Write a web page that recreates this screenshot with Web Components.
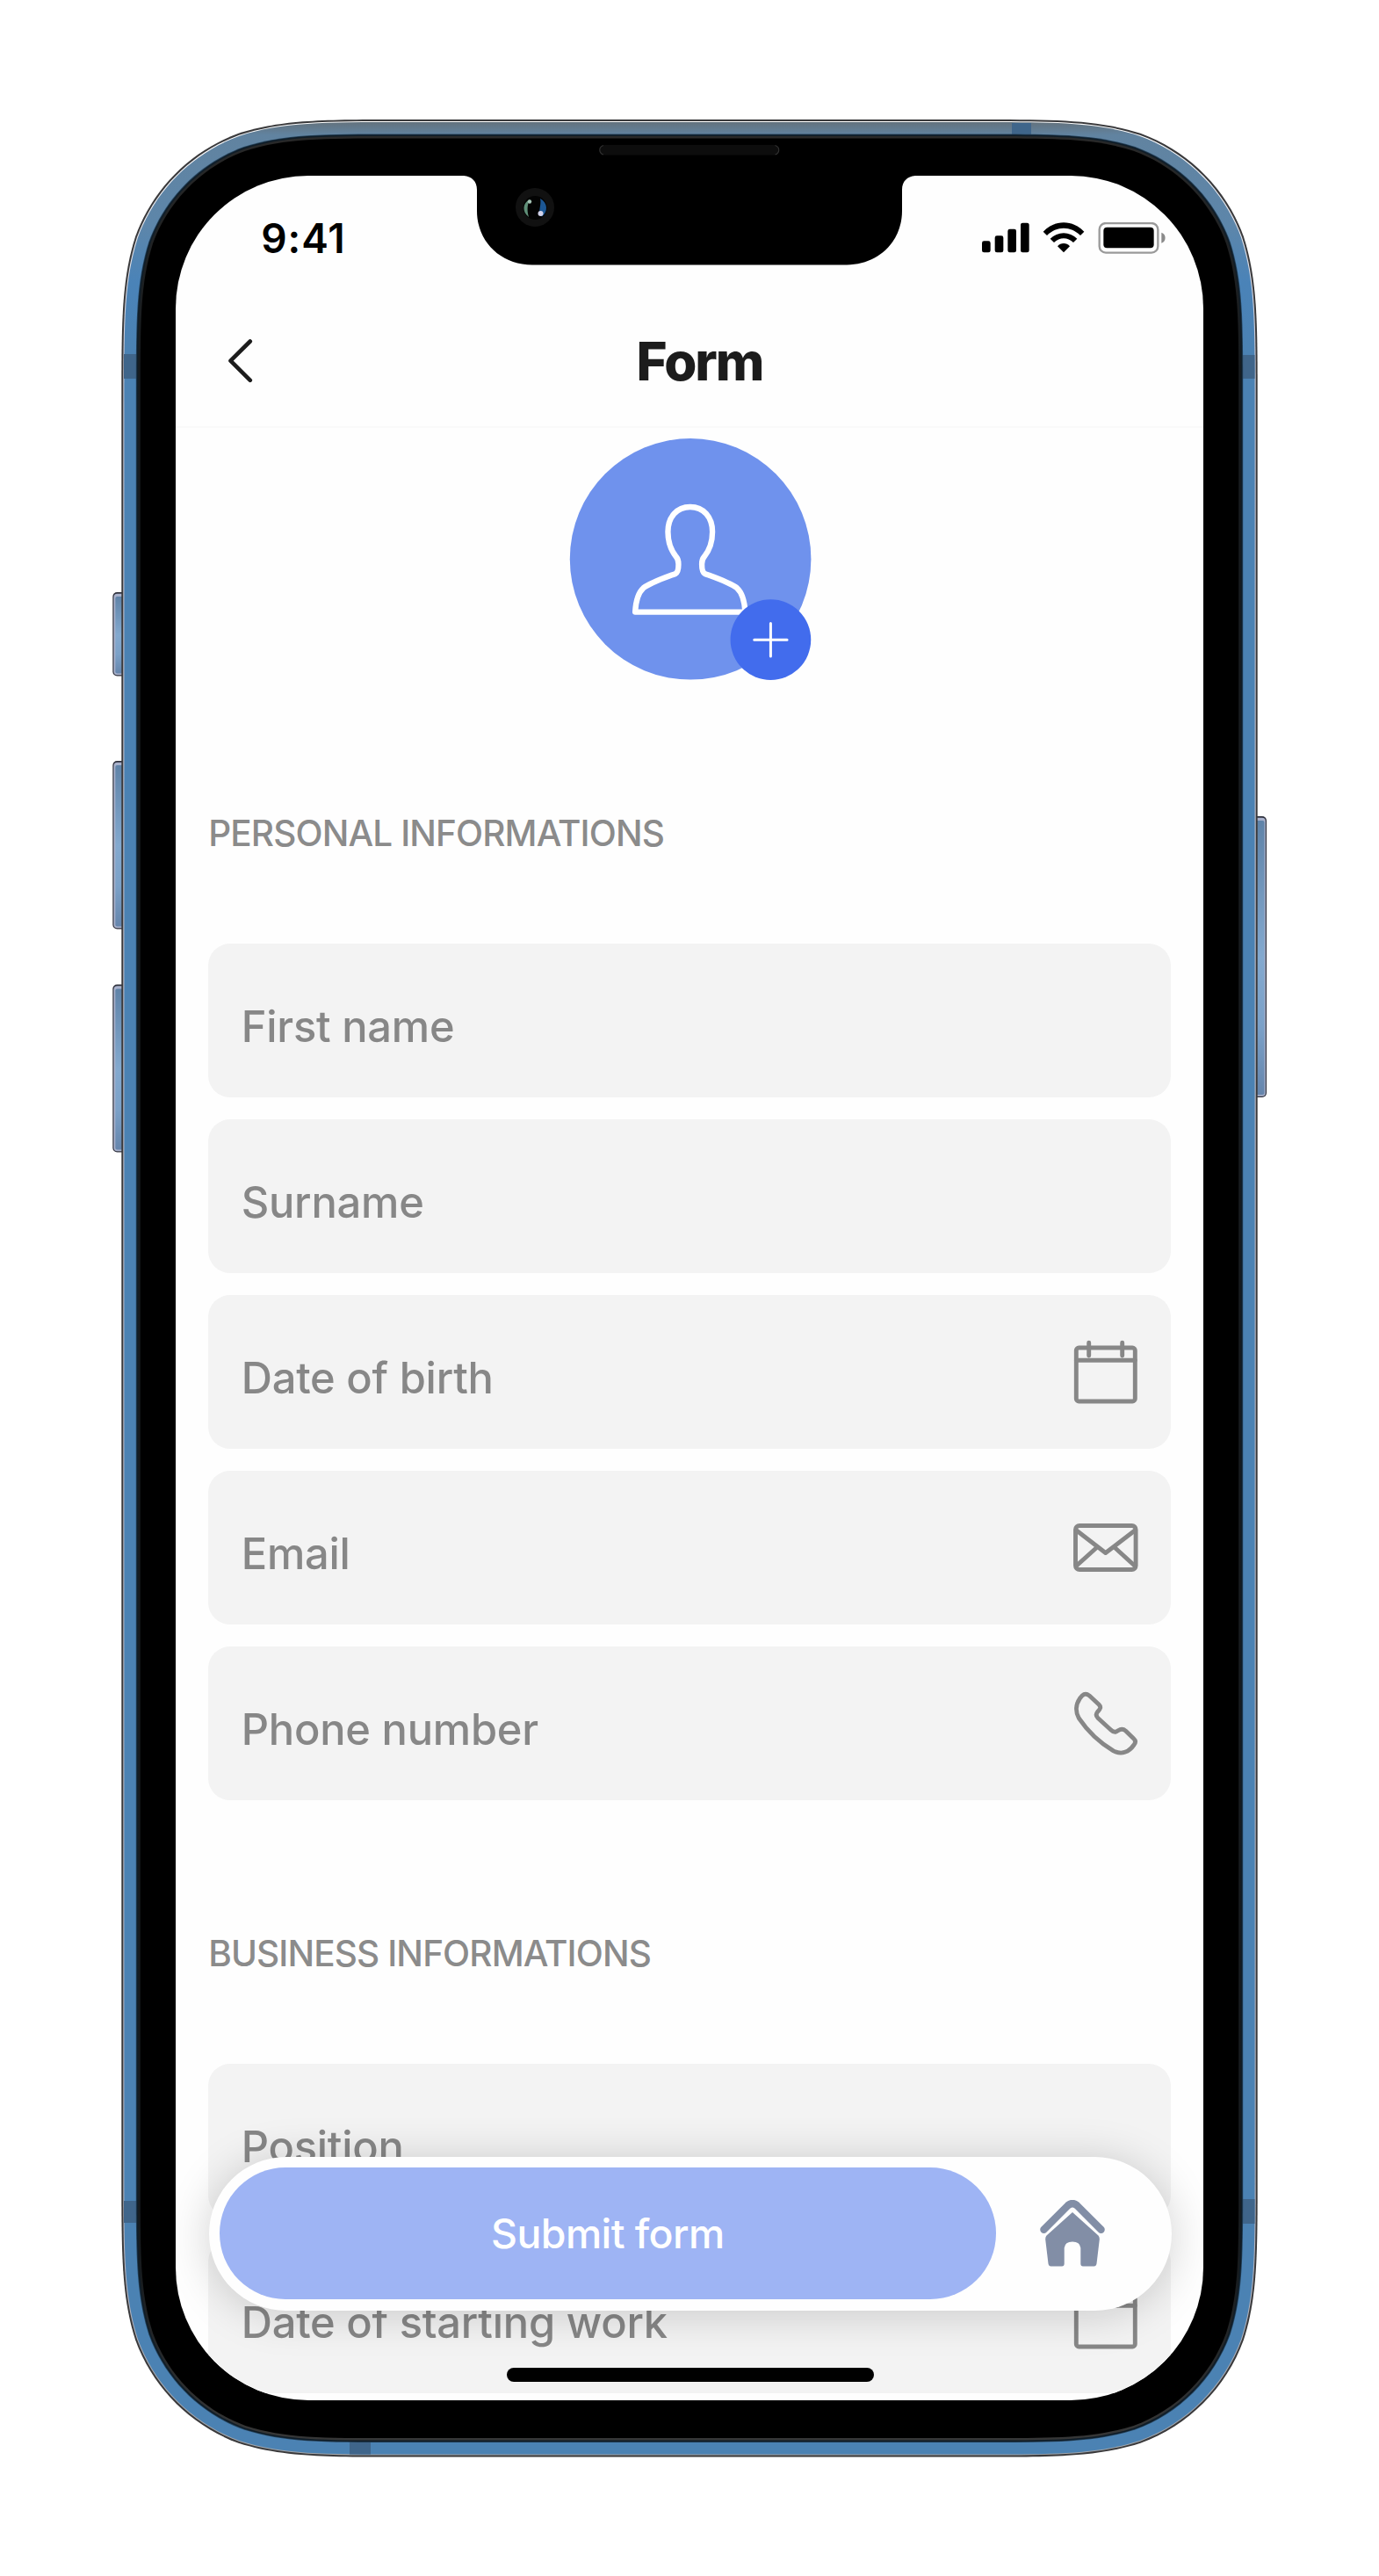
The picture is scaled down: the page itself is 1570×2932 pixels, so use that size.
<!DOCTYPE html>
<html lang="en">
<head>
<meta charset="utf-8">
<title>Form</title>
<style>
  html, body { margin: 0; background: #fff; }
  body { font-family: Inter, "Liberation Sans", sans-serif; color: #000; }
</style>
</head>
<body>
<phone-frame>
  <phone-screen>
    <status-bar time="9:41"></status-bar>
    <nav-header>Form</nav-header>
    <avatar-picker></avatar-picker>
    <form-section heading="PERSONAL INFORMATIONS">
      <form-field>First name</form-field>
      <form-field>Surname</form-field>
      <form-field icon="calendar">Date of birth</form-field>
      <form-field icon="mail">Email</form-field>
      <form-field icon="phone">Phone number</form-field>
    </form-section>
    <form-section heading="BUSINESS INFORMATIONS">
      <form-field>Position</form-field>
      <form-field icon="calendar">Date of starting work</form-field>
    </form-section>
    <action-bar slot="overlay">Submit form</action-bar>
  </phone-screen>
</phone-frame>
<script>
const define = (name, render) => customElements.define(name, class extends HTMLElement {
  constructor() { super(); this.attachShadow({ mode: 'open' }); }
  connectedCallback() { this.shadowRoot.innerHTML = render(this); }
});

/* Rounded rectangle with continuous-curvature corners. */
function squircle(x, y, w, h, r) {
  const a = 1.52866498 * r, b = 1.08849296 * r, c = .86840694 * r, d = .63149379 * r,
        e = .07491139 * r, f = .37282383 * r, g = .16905956 * r, X = x + w, Y = y + h;
  return `M${x + a} ${y}H${X - a}C${X - b} ${y} ${X - c} ${y} ${X - d} ${y + e}C${X - f} ${y + g} ${X - g} ${y + f} ${X - e} ${y + d}C${X} ${y + c} ${X} ${y + b} ${X} ${y + a}
  V${Y - a}C${X} ${Y - b} ${X} ${Y - c} ${X - e} ${Y - d}C${X - g} ${Y - f} ${X - f} ${Y - g} ${X - d} ${Y - e}C${X - c} ${Y} ${X - b} ${Y} ${X - a} ${Y}
  H${x + a}C${x + b} ${Y} ${x + c} ${Y} ${x + d} ${Y - e}C${x + f} ${Y - g} ${x + g} ${Y - f} ${x + e} ${Y - d}C${x} ${Y - c} ${x} ${Y - b} ${x} ${Y - a}
  V${y + a}C${x} ${y + b} ${x} ${y + c} ${x + e} ${y + d}C${x + g} ${y + f} ${x + f} ${y + g} ${x + d} ${y + e}C${x + c} ${y} ${x + b} ${y} ${x + a} ${y}Z`;
}
const shell = (inset, fill) =>
  `<path d="${squircle(138.3 + inset, 136 + inset, 1293.4 - 2 * inset, 2660.6 - 2 * inset, 211 - inset)}" fill="${fill}"/>`;
const sideButton = (x, y, w, h) => `
  <rect x="${x}" y="${y}" width="${w}" height="${h}" rx="5" fill="#30323e"/>
  <rect x="${x + 1.2}" y="${y + 1.8}" width="${w - 2.4}" height="${h - 3}" rx="4" fill="#a9b2cc"/>
  <rect x="${x + 3}" y="${y + 5}" width="${w - 5.5}" height="${h - 8}" rx="2" fill="url(#btn)"/>`;

define('phone-frame', () => `
<style>
  :host { display: grid; width: 1570px; height: 2932px; position: relative; }
  .body, .notch { grid-area: 1 / 1; width: 1570px; height: 2932px; display: block; }
  .notch { pointer-events: none; z-index: 2; }
  .screen { grid-area: 1 / 1; margin: 200px; z-index: 1; }
</style>
<svg class="body" viewBox="0 0 1570 2932">
  <defs>
    <linearGradient id="blue" gradientUnits="userSpaceOnUse" x1="0" y1="138" x2="0" y2="400">
      <stop offset="0" stop-color="#63717b"/><stop offset=".06" stop-color="#6183a0"/>
      <stop offset=".45" stop-color="#5d86aa"/><stop offset=".7" stop-color="#4a83b8"/><stop offset="1" stop-color="#4b82b3"/>
    </linearGradient>
    <linearGradient id="edge" gradientUnits="userSpaceOnUse" x1="0" y1="138" x2="0" y2="2797">
      <stop offset="0" stop-color="#fff"/><stop offset=".1" stop-color="#c8c8d4"/><stop offset=".93" stop-color="#b4b4be"/><stop offset="1" stop-color="#a0a4a8"/>
    </linearGradient>
    <linearGradient id="btn" x1="0" y1="0" x2="0" y2="1">
      <stop offset="0" stop-color="#5f83a8"/><stop offset=".5" stop-color="#83a9cf"/><stop offset=".75" stop-color="#7ba1c8"/><stop offset="1" stop-color="#6585ac"/>
    </linearGradient>
    <linearGradient id="rim" gradientUnits="userSpaceOnUse" x1="0" y1="138" x2="0" y2="2797">
      <stop offset="0" stop-color="#2a2a2a"/><stop offset=".1" stop-color="#171b1e"/><stop offset=".92" stop-color="#171b1e"/><stop offset="1" stop-color="#3a3a3a"/>
    </linearGradient>
  </defs>
  ${sideButton(128.3, 674, 18, 95.5)}
  ${sideButton(128.3, 866, 18, 191.5)}
  ${sideButton(128.3, 1120.5, 18, 191)}
  ${sideButton(1424, 929, 18, 320)}
  ${shell(0, '#39393b')}
  ${shell(2, 'url(#edge)')}
  ${shell(3.1, 'url(#blue)')}
  <g fill="#3f658a">
    <rect x="1152" y="140" width="22" height="15"/><rect x="141" y="403" width="14" height="28"/>
    <rect x="1414" y="404" width="14.5" height="27"/><rect x="141" y="2505" width="14" height="25"/>
    <rect x="1414" y="2503" width="14.5" height="28"/><rect x="398" y="2778" width="24" height="15.5"/>
  </g>
  ${shell(16.5, '#26435c')}
  ${shell(17.3, '#0f1d28')}
  ${shell(19, 'url(#rim)')}
  ${shell(21.5, '#000')}
</svg>
<div class="screen"><slot></slot></div>
<svg class="notch" viewBox="0 0 1570 2932">
  <path d="M528 199H1042V200C1033 201 1027 206 1027 216V240C1027 275 1000 301.4 964 301.4H606C570 301.4 543 275 543 240V216C543 206 537 201 528 200Z"/>
  <rect x="682.5" y="165" width="204.5" height="11.5" rx="5.7" fill="#0d0d0d"/>
  <path d="M687 165.500Q682.800 167 682.800 170.700Q682.800 174.500 687 176M882.500 165.500Q886.700 167 886.700 170.700Q886.700 174.500 882.500 176" fill="none" stroke="#303030" stroke-width="1.2"/>
  <circle cx="609" cy="236" r="22" fill="#111"/>
  <circle cx="609.200" cy="236.500" r="13.500" fill="#030303"/>
  <path d="M603 227C595 231 594 241 602 247C600 240 600 234 603 227Z" fill="#5f8f78"/>
  <circle cx="603" cy="229.500" r="2.200" fill="#a5c4b6"/>
  <path d="M615 226C624 231 624 241 617 246.500C611 243 617 234 615 226Z" fill="#1c5794"/>
  <circle cx="615.500" cy="243" r="3" fill="#d3d3ea"/>
</svg>`);

define('phone-screen', () => `
<style>
  :host { display: flex; flex-direction: column; position: relative; width: 1170px; height: 2532px;
          overflow: hidden; background: #fefefe; border-radius: 151px; }
  .content { display: flex; flex-direction: column; }
  .home { position: absolute; left: 377px; bottom: 21px; width: 418px; height: 16px; border-radius: 8px; background: #000; }
</style>
<div class="content"><slot></slot></div>
<slot name="overlay"></slot>
<div class="home"></div>`);

define('status-bar', el => `
<style>
  :host { display: flex; justify-content: space-between; align-items: center; box-sizing: border-box;
          height: 142px; padding: 0 43.3px 0 97.3px; }
  time { font-size: 46px; font-weight: 600; line-height: 50px; letter-spacing: .9px; }
  svg { display: block; width: 209px; height: 35.7px; }
</style>
<time>${el.getAttribute('time')}</time>
<svg viewBox="353 400 627 107">
  <rect x="353" y="464" width="29" height="39" rx="7"/><rect x="397" y="446" width="29" height="57" rx="7"/>
  <rect x="441" y="423" width="29" height="80" rx="7"/><rect x="485" y="402" width="29" height="101" rx="7"/>
  <path d="M562 432C601 390 663 390 702 432L689 445C656 412 608 412 575 445Z"/>
  <path d="M586 456C611 430 653 430 678 456L665 469C646 450 618 450 599 469Z"/>
  <path d="M611 482C622 469 642 469 653 482L632 503Z"/>
  <rect x="754" y="403" width="200" height="101" rx="22" fill="none" stroke="#9a9a9a" stroke-width="7"/>
  <rect x="768" y="417" width="172" height="71" rx="12"/>
  <path d="M966 435C983 440 983 466 966 471Z" fill="#8a8a8a"/>
</svg>`);

define('nav-header', () => `
<style>
  :host { display: flex; align-items: center; box-sizing: border-box; height: 145px; padding: 0 60.5px 6px 59.5px;
          border-bottom: 2px solid #fafafa; color: #1c1c1c; }
  svg { display: block; width: 28px; height: 50px; }
  h1 { flex: 1; margin: 0; padding-right: 4px; text-align: center; font-size: 60px; font-weight: 800; line-height: 66px; letter-spacing: -2px; }
</style>
<svg viewBox="0 0 28 50" fill="none" stroke="currentColor" stroke-width="4.600" stroke-linecap="round" stroke-linejoin="round"><path d="M24.800 2.500L2.500 24.700L24.800 46.800"/></svg>
<h1><slot></slot></h1>`);

define('avatar-picker', () => `
<style>
  :host { display: block; width: 274.6px; height: 274.6px; margin: 12px auto 0; transform: translateX(.8px); }
  svg { display: block; width: 100%; height: 100%; overflow: visible; }
</style>
<svg viewBox="147 56 824 824">
  <circle cx="559" cy="468" r="412" fill="#6f92ed"/>
  <path d="M370 649C372 615 380 583 398 567C420 549 470 532 508 518C519 512 518 495 518 484C518 472 516 467 510 460C492 438 482 415 482 375C482 325 512 290 558 290C604 290 634 325 634 375C634 415 624 438 606 460C600 467 598 472 598 484C598 495 597 512 608 518C646 532 696 549 718 567C736 583 744 615 746 649Z" fill="none" stroke="#fff" stroke-width="19" stroke-linejoin="round"/>
  <circle cx="833" cy="743.500" r="137.500" fill="#426ced"/>
  <path d="M777 744H889M833 688V800" stroke="#fff" stroke-width="9" stroke-linecap="round"/>
</svg>`);

define('form-section', el => `
<style>
  :host { display: flex; flex-direction: column; margin-top: 150.400px; padding: 0 36.600px 0 37.200px; }
  h2 { margin: 0 0 100px; font-size: 40.500px; font-weight: 450; line-height: 50px; letter-spacing: -.88px; color: #8b8b8b; white-space: nowrap; }
  .fields { display: flex; flex-direction: column; gap: 25px; }
</style>
<h2>${el.getAttribute('heading')}</h2>
<div class="fields"><slot></slot></div>`);

const icons = {
  calendar: '<rect x="4.300" y="10" width="67" height="61" rx="3"/><path d="M4.300 24.300H71.300M18.700 4.200V19M56.700 4.200V19"/>',
  mail: '<rect x="3.500" y="12.500" width="68.600" height="50" rx="4.500"/><path d="M5 18.200L37.700 43.500L70.700 18.200M27.500 37.500L4.700 58M48.200 37.500L70.700 58"/>',
  phone: '<path d="M8.300 9.300C11.500 5 14.500 2.200 19 5.800L30 16C33.500 19.500 31 21.500 28.500 24.500C26.500 27 27 29.500 29 31.500L43.500 44.800C46.500 47.800 49.500 47.800 52 45.700C55 43.700 58 43.800 60.500 46L69.800 55C72 57 72 59.500 70 62C64.500 70 56 73.500 46.700 68.900C31 59.500 18 47.500 7.300 31.600C3 24 4 15.500 8.300 9.300Z"/>'
};
define('form-field', el => `
<style>
  :host { display: flex; align-items: center; justify-content: space-between; box-sizing: border-box; height: 175px;
          padding: 0 37.500px 0 37.500px; border-radius: 25px; background: #f3f3f3; color: #878787; }
  span { padding-top: 15px; font-size: 48.800px; font-weight: 500; line-height: 60px; letter-spacing: -.22px; }
  svg { display: block; width: 75px; height: 75px; margin-top: 1px; }
</style>
<span><slot></slot></span>
${icons[el.getAttribute('icon')] ? `<svg viewBox="0 0 75 75" fill="none" stroke="#878787" stroke-width="4.900" stroke-linecap="round" stroke-linejoin="round">${icons[el.getAttribute('icon')]}</svg>` : ''}`);

define('action-bar', () => `
<style>
  :host { position: absolute; left: 37.500px; right: 36.300px; top: 2255px; height: 174.600px; box-sizing: border-box;
          display: flex; align-items: center; padding: 0 76px 0 12.300px; border-radius: 88px; background: #fefefe;
          box-shadow: 0 4px 50px rgba(0, 0, 0, .18); }
  .submit { display: flex; align-items: center; justify-content: center; width: 884.200px; height: 150px; border-radius: 75px; background: #9eb4f4;
           color: #fff; font-size: 46.400px; font-weight: 500; line-height: 56px; letter-spacing: -.55px; }
  svg { display: block; width: 74px; height: 76px; margin-left: auto; }
</style>
<div class="submit"><slot></slot></div>
<svg viewBox="0 0 74 76" fill="#828ea6">
  <path d="M4.400 33.200L32 5.500Q37 1.500 42 5.500L69.600 33.200" fill="none" stroke="#828ea6" stroke-width="8.400" stroke-linecap="round" stroke-linejoin="round" transform="translate(0 .6)"/>
  <path d="M37 14L66.500 40.500Q68 42.500 67.800 45L64.500 72.500Q64 75.400 61.500 75.400H49Q46.300 75.400 46.300 72.500V54.500Q45.500 47.500 37 47.500Q28.500 47.500 27.700 54.500V72.500Q27.700 75.400 25 75.400H12.500Q10 75.400 9.500 72.500L6.200 45Q6 42.500 7.500 40.500Z"/>
</svg>`);
</script>
</body>
</html>
